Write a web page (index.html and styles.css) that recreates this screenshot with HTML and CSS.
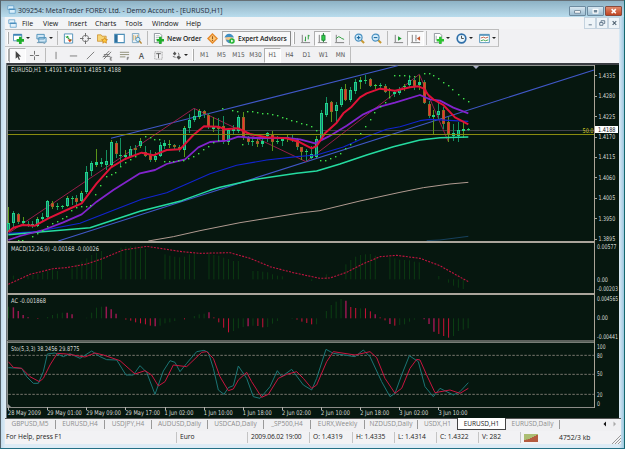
FILE: index.html
```html
<!DOCTYPE html>
<html lang="en">

<head>
    <meta charset="UTF-8">
    <title>309254: MetaTrader FOREX Ltd. - Demo Account - [EURUSD,H1]</title>
    <link rel="stylesheet" href="styles.css">
</head>

<body>
    <div class="window">
        <div class="titlebar">
            <svg class="app-icon" viewBox="0 0 12 12"><path d="M1 1h8v5H1zM3 5h8v6H3z" fill="#d8eefa" stroke="#5a9cc8"/><path d="M3 6h8" stroke="#3d83b5"/></svg>
            <span class="title">309254: MetaTrader FOREX Ltd. - Demo Account - [EURUSD,H1]</span>
            <div class="window-buttons">
                <span class="wbtn"><svg viewBox="0 0 16 9"><rect x="5" y="4" width="6" height="2.5" fill="#fff" stroke="#4d6478" stroke-width=".7"/></svg></span>
                <span class="wbtn"><svg viewBox="0 0 16 9"><rect x="5.5" y="2.5" width="5" height="4" fill="#6f8799" stroke="#fff" stroke-width="1.3"/></svg></span>
                <span class="wbtn close"><svg viewBox="0 0 16 9"><path d="M6 2.3l4.5 4.4M10.5 2.3L6 6.7" stroke="#fff" stroke-width="1.7"/></svg></span>
            </div>
        </div>

        <div class="menubar">
            <svg class="app-icon" viewBox="0 0 12 12"><path d="M1 1h8v5H1zM3 5h8v6H3z" fill="#e4f2fb" stroke="#5a9cc8"/><path d="M3 6h8" stroke="#3d83b5"/></svg>
            <span class="menu m-file">File</span>
            <span class="menu m-view">View</span>
            <span class="menu m-insert">Insert</span>
            <span class="menu m-charts">Charts</span>
            <span class="menu m-tools">Tools</span>
            <span class="menu m-window">Window</span>
            <span class="menu">Help</span>
            <div class="child-buttons">
                <span><svg viewBox="0 0 11 11"><path d="M4 7.5h3.5" stroke="#5d7387"/></svg></span>
                <span><svg viewBox="0 0 11 11" fill="none" stroke="#5d7387"><path d="M4.5 4.500V3h4v3H7M3 5h3.500v3H3z"/></svg></span>
                <span><svg viewBox="0 0 11 11"><path d="M4 3.500l4 4M8 3.500l-4 4" stroke="#4f6170" stroke-width="1.2"/></svg></span>
            </div>
        </div>

        <div class="toolbar main-tools">
            <span class="handle"></span>
            <span class="drop"><svg viewBox="0 0 12 12"><path d="M.5 1.500h9v7h-9z" fill="#fff" stroke="#4d8fb8"/><path d="M.5 2h9" stroke="#3d83b5" stroke-width="2"/><path d="M8 4v8M4 8h8" stroke="#1fae2a" stroke-width="3"/></svg><i class="caret"></i></span>
            <span class="drop"><svg viewBox="0 0 12 12"><path d="M1 1.500h8v5H1zM3 5h8v5H3z" fill="#cfe6f5" stroke="#4d8fb8"/><path d="M1 10.500h6l3 1" stroke="#6a93ad" fill="none"/></svg><i class="caret"></i></span>
            <span class="sep"></span>
            <span class="tool"><svg viewBox="0 0 12 12"><path d="M1.500 1h9v10h-9z" fill="#fff" stroke="#4d8fb8"/><path d="M3 5l2-2 2 2z" fill="#18a028"/><path d="M5 7l2.500 3L10 7z" fill="#d8401c"/><path d="M3 4l6 4" stroke="#2b9a38"/></svg></span>
            <span class="tool"><svg viewBox="0 0 12 12"><circle cx="6" cy="6" r="3.500" fill="none" stroke="#777"/><path d="M6 0v4M6 8v4M0 6h4M8 6h4" stroke="#666"/></svg></span>
            <span class="tool"><svg viewBox="0 0 12 12"><path d="M.5 2h4l1 1.500H10V9H.5z" fill="#f6d476" stroke="#c98b25" stroke-width=".8"/><path d="M8.300 5l1 2 2.200.3-1.600 1.500.4 2.300-2-1.100-2 1.100.4-2.300L5 7.300 7.300 7z" fill="#ffc83a" stroke="#c57a18" stroke-width=".7"/></svg></span>
            <span class="tool"><svg viewBox="0 0 12 12"><path d="M.8 1.500h10.400v9H.8z" fill="#fff" stroke="#4d8fb8" stroke-width="1.2"/><path d="M1 2h3v8H1z" fill="#2d6f9d"/></svg></span>
            <span class="tool"><svg viewBox="0 0 12 12"><path d="M1.500.5h7v10h-7z" fill="#e9f3fa" stroke="#7ea6c1"/><path d="M3 2v6M5 3v4M7 2v3" stroke="#d19a3c" stroke-width=".8"/><circle cx="7.500" cy="7" r="2.300" fill="#d8effb" stroke="#4d8fb8"/><path d="M9 8.500l2.500 3" stroke="#b98935" stroke-width="1.5"/></svg></span>
            <span class="sep"></span>
            <span class="new-order"><svg viewBox="0 0 12 12"><path d="M1.500.5h6l2 2v8h-8z" fill="#fff" stroke="#8a9298"/><path d="M3 3h4M3 5h5M3 7h3" stroke="#9fa8ad" stroke-width=".8"/><path d="M8 4v8M4 8h8" stroke="#1fae2a" stroke-width="2.8"/></svg><b>New Order</b></span>
            <span class="tool"><svg viewBox="0 0 12 12"><path d="M6 1l5 5-5 5-5-5z" fill="#fdc878" stroke="#e58a2c" stroke-width="1.5"/><path d="M6 3.500v3.200M6 7.600v1" stroke="#9a5714" stroke-width="1.2"/></svg></span>
            <span class="experts"><svg viewBox="0 0 12 12"><circle cx="5.500" cy="6" r="4" fill="#f2c38c"/><path d="M.5 5Q5 3.500 11 5 9 .8 5.500.8T.5 5z" fill="#3f8fc3"/><path d="M2 7q2 5 5 4V8z" fill="#4a91bd"/><circle cx="8.700" cy="8.700" r="3" fill="#24b534"/><path d="M7.800 7v3.400l2.600-1.700z" fill="#fff"/></svg><b>Expert Advisors</b></span>
            <span class="handle wide"></span>
            <span class="tool"><svg viewBox="0 0 12 12"><path d="M2.500 2v8.500H11M1 10.500h1" stroke="#777" fill="none"/><path d="M6 4v5M5 8h1M9 2v5M9 3h1.500" stroke="#249a35"/></svg></span>
            <span class="tool pressed"><svg viewBox="0 0 12 12"><path d="M2.500 2v8.500H11M1 10.500h1" stroke="#777" fill="none"/><path d="M7 0v10" stroke="#147a2b"/><path d="M5.200 2.500h3.600V8H5.200z" fill="#2fcb4a" stroke="#147a2b" stroke-width=".8"/></svg></span>
            <span class="tool"><svg viewBox="0 0 12 12"><path d="M2.500 2v8.500H11M1 10.500h1" stroke="#777" fill="none"/><path d="M2.500 6q2.500-3 4-1.500T11 7" stroke="#249a35" fill="none"/></svg></span>
            <span class="sep narrow"></span>
            <span class="tool"><svg viewBox="0 0 12 12"><path d="M7.500 7.500l3.500 3.500" stroke="#c89830" stroke-width="2.2"/><circle cx="5" cy="5" r="3.800" fill="#d4ecfa" stroke="#4a90c0" stroke-width="1.3"/><path d="M3 5h4M5 3v4" stroke="#1f6ca3" stroke-width="1.2"/></svg></span>
            <span class="tool"><svg viewBox="0 0 12 12"><path d="M7.500 7.500l3.500 3.500" stroke="#c89830" stroke-width="2.2"/><circle cx="5" cy="5" r="3.800" fill="#d4ecfa" stroke="#4a90c0" stroke-width="1.3"/><path d="M3 5h4" stroke="#1f6ca3" stroke-width="1.2"/></svg></span>
            <span class="sep"></span>
            <span class="tool"><svg viewBox="0 0 12 12"><path d="M2.500 2v8.500H11M1 10.500h1" stroke="#777" fill="none"/><path d="M5.500 3.500v5l4-2.500z" fill="#1e9b31"/></svg></span>
            <span class="tool pressed"><svg viewBox="0 0 12 12"><path d="M2.500 2v8.500H11M1 10.500h1M6.500 2v7" stroke="#777" fill="none"/><path d="M11 3.500v5L7.500 6z" fill="#c4532c"/></svg></span>
            <span class="sep"></span>
            <span class="drop"><svg viewBox="0 0 12 12"><path d="M1.500.5h6l2 2v8h-8z" fill="#fff" stroke="#8a9298"/><path d="M3.500 3v5" stroke="#9fa8ad"/><path d="M8 4v8M4 8h8" stroke="#2cc430" stroke-width="2.8"/></svg><i class="caret"></i></span>
            <span class="drop"><svg viewBox="0 0 12 12"><circle cx="6" cy="6" r="4.700" fill="#e9f5fc" stroke="#2f6fa8" stroke-width="1.8"/><path d="M6 3v3h2.500" stroke="#444" fill="none"/></svg><i class="caret"></i></span>
            <span class="drop"><svg viewBox="0 0 12 12"><path d="M.7 1.500h10.600v9H.7z" fill="#fff" stroke="#4d8fb8"/><path d="M1 2.300h10" stroke="#4d8fb8" stroke-width="1.5"/><path d="M2 5.500l3-1 2 1 3-1" stroke="#b54a30" fill="none" stroke-width=".9"/><path d="M2 8.500l3-1 2 1 3-1" stroke="#249a35" fill="none" stroke-width=".9"/></svg><i class="caret"></i></span>
        </div>

        <div class="toolbar line-tools">
            <span class="handle"></span>
            <span class="tool pressed"><svg viewBox="0 0 12 12"><path d="M4 1v8.500l2-2 1.500 3.500 1.300-.6L7.300 7H10z" fill="#444"/></svg></span>
            <span class="tool"><svg viewBox="0 0 12 12"><path d="M6 1v4M6 7v4M1 6h4M7 6h4" stroke="#666"/></svg></span>
            <span class="sep"></span>
            <span class="tool"><svg viewBox="0 0 12 12"><path d="M5.500 2v8" stroke="#777"/></svg></span>
            <span class="tool"><svg viewBox="0 0 12 12"><path d="M2 6.500h8" stroke="#777"/></svg></span>
            <span class="tool"><svg viewBox="0 0 12 12"><path d="M2 10l8-8" stroke="#777"/></svg></span>
            <span class="tool"><svg viewBox="0 0 12 12"><path d="M1 8l7-7M2 10l8-8M2 5h6M1 7h8" stroke="#666" stroke-width=".9"/><path d="M11 8H9v3h2M9 9.500h1.500" stroke="#555" fill="none" stroke-width=".7"/></svg></span>
            <span class="tool"><svg viewBox="0 0 12 12"><path d="M1 2.500h10M1 5h10M1 7.500h6" stroke="#8a8a72"/><path d="M11 8H9v3M9 9.500h1.500" stroke="#555" fill="none" stroke-width=".7"/></svg></span>
            <span class="tool letter">A</span>
            <span class="tool"><svg viewBox="0 0 12 12"><path d="M2 2h8v8H2z" stroke="#888" stroke-dasharray="1 1" fill="none"/><path d="M3.500 4h5M6 4v5" stroke="#555"/></svg></span>
            <span class="drop"><svg viewBox="0 0 12 12"><path d="M2 4l2-2.500L6 4 4 6zM6 8l2-2 3 2-2.500 2.500z" fill="#555"/><path d="M2 7l3 1M8 3l1 3" stroke="#666"/></svg><i class="caret"></i></span>
            <span class="handle wide"></span>
            <span class="tool period">M1</span>
            <span class="tool period">M5</span>
            <span class="tool period">M15</span>
            <span class="tool period">M30</span>
            <span class="tool period pressed">H1</span>
            <span class="tool period">H4</span>
            <span class="tool period">D1</span>
            <span class="tool period">W1</span>
            <span class="tool period">MN</span>
        </div>

        <svg class="chart" id="chart" viewBox="6 63 613 355"></svg>

        <div class="tabs">
            <span class="tab w51">GBPUSD,M5</span>
            <span class="tab w49">EURUSD,H4</span>
            <span class="tab w47">USDJPY,H4</span>
            <span class="tab w56">AUDUSD,Daily</span>
            <span class="tab w56">USDCAD,Daily</span>
            <span class="tab w47">_SP500,H4</span>
            <span class="tab w54">EURX,Weekly</span>
            <span class="tab w53">NZDUSD,Daily</span>
            <span class="tab w39 last">USDX,H1</span>
            <span class="tab w49 active">EURUSD,H1</span>
            <span class="tab w54">EURUSD,Daily</span>
            <svg class="tab-arrows" viewBox="0 0 14 6"><path d="M3 .5v5L.5 3z" fill="#111"/><path d="M10.500.5v5L13 3z" fill="#aaa"/></svg>
        </div>

        <div class="status">
            <span class="cell help">For Help, press F1</span>
            <span class="cell profile">Euro</span>
            <span class="cell date">2009.06.02 19:00</span>
            <span class="cell open">O: 1.4319</span>
            <span class="cell price">H: 1.4335</span>
            <span class="cell price">L: 1.4314</span>
            <span class="cell price">C: 1.4322</span>
            <span class="cell price">V: 282</span>
            <svg class="signal" viewBox="0 0 15 8"><path d="M1 0v8M3 0v8M5 0v8M7 0v8M9 0v8M11 0v8M13 0v8" stroke="#8fa83c" stroke-width="1.4"/><path d="M1 6v2M3 5.500V8M5 5v3M7 4v4M9 3v5M11 2v6M13 1v7" stroke="#b8322a" stroke-width="1.4"/></svg>
            <span class="traffic">4752/3 kb</span>
            <svg class="grip" viewBox="0 0 10 10"><path d="M1 10l9-9M4 10l6-6M7 10l3-3" stroke="#999"/></svg>
        </div>
    </div>
    <script src="chart.js"></script>
</body>

</html>
```
FILE: styles.css
```css
body {
    margin: 0;
    font-family: "Open Sans", "Noto Sans", sans-serif;
    font-size: 7.5px;
    color: #222;
    overflow: hidden;
}

.window {
    box-sizing: border-box;
    width: 625px;
    height: 449px;
    padding: 0 5px 4px 5px;
    background: linear-gradient(to right, #56636b 0, #56636b 1px, #c3dced 1px, #dcebf5 5px, #dcebf5 619px, #c3dced 621px, #9cc9e0 624px, #17686e 624px);
    border-bottom: 1px solid #236f84;
    display: flex;
    flex-direction: column;
}

.window > * {
    flex: none;
}

svg {
    display: block;
}

.titlebar {
    height: 17px;
    margin: 0 -4px;
    padding: 0 2px 0 6px;
    border-top: 1px solid #666f75;
    box-sizing: border-box;
    background: linear-gradient(#8db2c5, #a9cbdc 60%, #b9dced);
    display: flex;
    align-items: center;
}

.app-icon {
    width: 9px;
    height: 9px;
}

.title {
    flex: 1;
    margin-left: 2px;
    padding-top: 3px;
    font-size: 7px;
    letter-spacing: -0.02px;
    color: #1c2a3a;
    white-space: nowrap;
}

.window-buttons {
    display: flex;
    gap: 1px;
    padding-top: 3px;
}

.wbtn {
    width: 15px;
    height: 8px;
    border: 1px solid #6d8ba0;
    border-radius: 1px;
    background: linear-gradient(#d6e6f0, #9dbdd1);
}

.wbtn.close {
    background: linear-gradient(#e08a6c, #c04523);
    border-color: #8a4a3c;
}

.menubar {
    height: 12px;
    padding-left: 3px;
    background: #f3f4f6;
    display: flex;
    align-items: center;
}

.menu {
    font-size: 7px;
    color: #111;
}

.m-file {
    width: 21px;
    margin-left: 5px;
}

.m-view {
    width: 25px;
}

.m-insert {
    width: 27px;
}

.m-charts {
    width: 30px;
}

.m-tools {
    width: 27px;
}

.m-window {
    width: 34px;
}

.child-buttons {
    margin-left: auto;
    display: flex;
}

.child-buttons span {
    width: 10px;
    height: 10px;
    border: 1px solid #c4d3df;
    background: #eef4f8;
}

.toolbar {
    display: flex;
    align-items: center;
    height: 16px;
    background: #f1f1f3;
    border-right: 1px solid #bdbdbd;
    box-sizing: border-box;
}

/* the shadows carry the face colour on to the right of each bar */
.main-tools {
    width: 494px;
    height: 18px;
    border-top: 1px solid #bdbdbd;
    border-bottom: 1px solid #c4c4c4;
    box-shadow: 120px 0 0 #f1f1f3;
    clip-path: inset(0 -120px 0 0);
}

.line-tools {
    width: 346px;
    box-shadow: 140px 0 0 #f1f1f3, 270px 0 0 #f1f1f3;
    clip-path: inset(0 -268px 0 0);
}

.handle {
    width: 2px;
    height: 12px;
    margin-left: 2px;
    border-left: 1px solid #fff;
    background: #aaa;
    flex: none;
    box-sizing: border-box;
}

.handle.wide {
    margin: 0 2px;
}

.sep {
    width: 1px;
    height: 14px;
    margin: 0 2px;
    background: #bbb;
    flex: none;
}

.sep.narrow {
    margin: 0 1px;
}

.tool,
.drop {
    display: flex;
    align-items: center;
    justify-content: center;
    width: 17px;
    height: 15px;
    box-sizing: border-box;
    flex: none;
}

.drop {
    width: 23px;
    justify-content: flex-start;
    padding-left: 4px;
    gap: 2px;
}

.tool svg,
.drop svg,
.new-order svg,
.experts svg {
    width: 11px;
    height: 11px;
    flex: none;
}

.caret {
    border: 2px solid transparent;
    border-top-color: #222;
    border-bottom: 0;
}

.pressed {
    background: #fafafb;
    border: 1px solid #b0b0b0;
    border-right-color: #fff;
    border-bottom-color: #fff;
}

.new-order {
    width: 54px;
    padding-left: 3px;
    box-sizing: border-box;
    display: flex;
    align-items: center;
    gap: 3px;
    white-space: nowrap;
    flex: none;
}

.new-order b,
.experts b {
    font-size: 6.7px;
    font-weight: 600;
    letter-spacing: -0.1px;
    color: #222;
}

.experts {
    width: 69px;
    height: 15px;
    margin-left: 1px;
    padding-left: 1px;
    box-sizing: border-box;
    display: flex;
    align-items: center;
    gap: 3px;
    white-space: nowrap;
    flex: none;
    border: 1px solid #aaa;
    border-right-color: #888;
    background: #f7f7f8;
}

.letter {
    font-size: 8px;
    font-weight: 600;
    color: #555;
}

.period {
    font-family: "DejaVu Sans Condensed", "DejaVu Sans", sans-serif;
    font-size: 6.5px;
    color: #555;
}

.chart {
    width: 613px;
    height: 355px;
    margin-left: 1px;
    overflow: visible;
}

.chart text {
    font-family: "DejaVu Sans", sans-serif;
    font-size: 6.4px;
    fill: #d8dcd8;
}

.tabs {
    height: 13px;
    margin-right: -1px;
    background: #f0f0f2;
    display: flex;
    box-sizing: border-box;
    border-top: 1px solid #555;
}

.tab {
    box-sizing: border-box;
    height: 9px;
    margin-top: 1px;
    border-right: 1px solid #999;
    text-align: center;
    font-size: 6.5px;
    line-height: 8px;
    color: #8c8c8c;
    white-space: nowrap;
}

.tab.last {
    border-right: 0;
}

.tab.active {
    height: 12px;
    margin-top: -1px;
    background: #fff;
    border: 1px solid #444;
    border-top: 0;
    line-height: 12px;
    color: #222;
}

.w39 { width: 39px; }
.w47 { width: 47px; }
.w49 { width: 49px; }
.w51 { width: 51px; }
.w53 { width: 53px; }
.w54 { width: 54px; }
.w56 { width: 56px; }

.tab-arrows {
    width: 14px;
    height: 6px;
    margin: 2px 4px 0 auto;
}

.status {
    height: 13px;
    margin-right: -1px;
    background: #f2f2f4;
    display: flex;
    align-items: center;
}

.cell {
    box-sizing: border-box;
    height: 11px;
    line-height: 10px;
    padding-left: 3px;
    border-right: 1px solid #c4c4c4;
    font-size: 6.7px;
    white-space: nowrap;
}

.help {
    width: 172px;
    padding-left: 1px;
}

.profile {
    width: 71px;
}

.date {
    width: 62px;
    letter-spacing: -0.15px;
}

.open {
    width: 43px;
}

.price {
    width: 42px;
}

.signal {
    width: 15px;
    height: 8px;
    margin-left: 3px;
}

.traffic {
    margin-left: 20px;
    font-size: 6.8px;
}

.grip {
    width: 10px;
    height: 10px;
    margin-left: auto;
    align-self: flex-end;
}
```
FILE: chart.js
```js
const svg = document.getElementById('chart');
const STEP = 4.89;
const barX = i => 8.5 + STEP * i;
let out = '';

// [high, body top, body bottom, low, bull]
const candles = [
    [207,223,231,232,1],[211,213,223,228,1],[213,214,222,224,0],[217,221,223,225,1],[221,224,226,227,0],
    [221,224,226,228,1],[217,219,226,227,1],[213,217,219,221,1],[200,201,217,218,1],[201,203,207,209,0],
    [203,206,207,210,1],[205,206,207,209,1],[196,198,206,207,1],[196,198,199,205,1],[195,198,202,205,0],
    [191,193,201,202,1],[166,172,192,194,1],[161,163,171,176,1],[149,162,165,167,1],[158,162,164,167,1],
    [150,161,165,170,1],[140,142,165,166,1],[141,143,154,158,0],[138,155,156,167,0],[150,155,157,160,1],
    [146,149,157,158,1],[145,148,150,155,0],[138,141,146,148,1],[146,152,156,157,0],[150,155,160,162,0],
    [152,156,160,162,1],[142,145,156,157,1],[140,143,146,149,1],[140,144,145,148,1],[144,145,147,150,0],
    [145,147,150,152,0],[126,128,150,157,1],[114,120,128,133,1],[109,116,120,122,1],[109,111,117,119,1],
    [110,111,114,118,0],[113,115,127,129,0],[117,127,129,132,1],[118,127,129,141,0],[116,126,142,144,0],
    [128,130,142,145,1],[125,128,131,134,1],[115,117,131,133,1],[112,117,137,140,0],[136,138,142,145,0],
    [137,141,142,146,1],[137,141,144,147,0],[136,141,144,147,1],[132,133,136,142,1],[131,134,142,151,0],
    [136,141,142,144,1],[138,139,141,146,1],[134,137,139,142,1],[135,138,139,142,0],[138,140,147,150,0],
    [147,147,152,160,0],[149,151,152,161,1],[146,154,158,159,1],[136,139,157,158,1],[110,113,139,141,1],
    [97,103,115,117,1],[101,102,112,122,0],[102,105,111,123,1],[87,89,105,107,1],[84,89,100,101,0],
    [87,90,100,102,1],[79,82,91,94,1],[77,80,82,89,1],[75,80,81,84,1],[78,79,86,87,0],
    [84,85,86,89,1],[83,85,86,89,1],[84,86,92,93,0],[88,89,91,98,0],[90,92,94,97,1],
    [87,89,93,95,1],[84,86,87,91,1],[75,80,85,87,1],[78,80,86,90,0],[75,82,85,90,1],
    [80,82,103,104,0],[101,104,116,118,0],[110,115,117,134,1],[102,111,115,120,1],[107,110,124,129,0],
    [117,122,134,142,0],[124,133,136,141,1],[122,130,136,142,1],[122,129,131,138,1],[128,129,130,131,1]
];

// curve vertices, three units to the pixel
const averages = {
    blue: '25,520 110,515 240,490 290,470 425,418 500,398 560,372 630,341 710,316 800,300 890,290 950,285 1030,261 1100,230 1160,208 1200,200 1260,182 1290,178 1405,184',
    aqua: '25,524 110,517 270,503 420,454 545,422 630,391 660,382 760,359 890,340 950,333 1020,312 1100,285 1180,260 1260,240 1320,233 1405,231',
    violet: '25,540 60,528 130,510 190,487 245,463 290,425 340,390 420,340 465,330 500,312 555,298 595,262 630,246 680,242 715,230 760,234 860,234 900,238 945,250 985,230 1040,197 1090,163 1140,140 1185,128 1260,105 1290,118 1320,122 1360,143 1405,160',
    red: '25,515 40,503 69,495 105,497 145,475 200,450 245,430 290,370 333,322 375,297 425,278 460,286 500,270 540,268 580,225 612,199 655,200 675,208 715,205 750,222 800,232 860,235 900,247 935,265 950,258 975,220 1010,188 1030,160 1055,140 1080,112 1100,100 1140,86 1185,92 1230,82 1255,79 1270,85 1285,105 1300,118 1330,135 1365,172 1405,193',
    tan: '445,543 520,530 600,512 720,488 900,459 960,452 1080,423 1200,397 1270,383 1350,372 1405,367',
    navy: '1280,542 1320,540 1405,529',
    zigzag: '25,520 582,145 918,305 1258,43 1345,245',
    trend: '175,543 600,407 1782,30',
    channel: '333,235 630,160 1193,17'
};
const strokes = {
    blue: ['#1224cf', 1.1], aqua: ['#25dca0', 1.5], violet: ['#8224cc', 1.8], red: ['#e01238', 2],
    tan: ['#b09a90', 1], navy: ['#16405c', 1], zigzag: ['#a81c50', .9], trend: ['#4058c8', 1.1], channel: ['#4058c8', 1.1]
};
const sar = '55,540 67,541 98,530 113,519 127,510 142,500 157,491 172,483 186,475 198,468 213,450 230,442 245,440 260,438 272,436 287,404 302,375 318,350 333,342 347,337 362,320 377,307 391,299 406,290 436,230 450,233 463,237 478,238 492,305 507,305 521,304 536,301 550,300 565,295 580,290 595,280 610,268 625,258 640,248 655,240 668,145 698,151 713,155 728,253 742,153 757,153 772,156 786,159 801,161 816,163 831,167 846,171 860,176 875,181 890,185 905,189 918,193 933,200 948,210 962,301 977,300 992,296 1006,288 1021,280 1036,265 1050,252 1065,238 1080,220 1095,199 1110,177 1124,158 1140,140 1155,128 1168,113 1183,45 1198,45 1213,47 1228,48 1243,50 1272,41 1287,41 1301,47 1316,55 1330,66 1345,77 1358,89 1374,102 1389,114 1404,125';

const macdSignal = '25,148 90,118 160,101 200,98 260,87 310,70 370,45 440,34 480,40 545,50 600,55 690,53 750,70 810,95 880,113 960,130 990,129 1040,112 1090,86 1140,65 1190,61 1260,70 1320,92 1360,115 1405,140';
const macdBars = {
    1:122, 4:122, 5:120, 6:117, 7:112, 8:108, 9:105, 10:108, 13:100, 14:88, 15:80, 16:70, 17:60, 18:53, 19:48,
    23:38, 24:35, 25:34, 26:34, 27:35, 28:42, 32:58, 33:62, 34:65, 35:67, 36:65, 37:58, 38:55, 41:55, 42:60,
    43:62, 44:68, 45:72, 46:78, 47:78, 50:108, 51:108, 52:110, 53:112, 54:118, 55:122, 56:124, 62:138, 65:118, 69:88,
    70:75, 71:65, 72:60, 73:58, 74:57, 75:62, 78:66, 79:70, 80:74, 81:75, 82:76, 83:80, 84:82, 88:123,
    90:143, 91:152, 92:158, 93:162
};
// g rising, r falling, m falling with a wider bar
const acBars = {
    0:'g215', 1:'m217', 2:'m228', 3:'m240', 4:'m247', 6:'r252', 8:'g246', 9:'g240', 10:'g236', 11:'g233', 12:'m233', 13:'m238',
    16:'g248', 17:'g233', 18:'g218', 19:'g215', 20:'m215', 21:'m223', 22:'m236', 24:'r254', 25:'r257', 26:'r262', 27:'r265',
    28:'r268', 29:'r272', 30:'m274', 31:'g272', 32:'g265', 33:'g262', 34:'g258', 36:'r253', 38:'g243', 39:'g238', 40:'g236',
    41:'m232', 42:'r247', 43:'r262', 44:'r278', 45:'r292', 46:'g288', 47:'g280', 48:'g276', 49:'m274', 50:'g272',
    51:'r273', 52:'r277', 53:'g276', 54:'g266', 55:'g258', 58:'g252', 59:'r254', 60:'r260', 61:'r264', 62:'r268', 63:'g268',
    65:'g228', 66:'g210', 67:'g200', 68:'g192', 69:'m197', 70:'r216', 71:'r219', 72:'g220', 73:'r220', 74:'r229', 75:'m238',
    76:'r247', 77:'r256', 78:'m267', 79:'r272', 80:'g270', 81:'g268', 82:'g260', 83:'g254', 85:'m253', 86:'m267', 87:'m290',
    88:'r297', 89:'r303', 90:'r308', 91:'g303', 92:'g288', 93:'g284', 94:'g280'
};
const stochK = '25,398 65,400 80,425 100,445 115,445 130,410 142,357 165,354 190,365 210,356 240,370 275,348 300,365 320,374 350,375 378,420 400,420 420,392 440,412 465,478 490,408 510,377 525,382 540,410 560,385 590,350 612,346 625,352 640,400 655,465 672,478 685,458 700,452 715,393 740,430 760,485 780,490 810,455 832,407 845,425 875,403 910,450 935,465 950,430 978,343 1000,355 1065,365 1090,345 1110,365 1145,440 1170,485 1185,475 1205,420 1228,362 1255,380 1275,455 1300,485 1320,460 1360,480 1380,470 1405,443';
const stochD = '25,380 40,397 65,400 90,425 118,440 130,430 150,390 172,355 200,357 255,366 285,354 310,360 360,377 405,417 435,407 455,420 475,453 495,440 520,390 560,395 605,352 620,350 640,370 660,425 685,467 700,462 715,435 740,412 755,440 785,487 805,478 835,430 860,418 890,410 910,430 935,460 950,450 980,380 1000,350 1065,360 1110,350 1130,368 1155,430 1185,475 1205,460 1230,400 1250,373 1260,375 1280,420 1305,473 1350,465 1380,475 1405,460';

function rect(x, y, w, h, fill) {
    out += `<rect x="${x}" y="${y}" width="${w}" height="${h}" fill="${fill}"/>`;
}
function line(points, color, width, dash) {
    out += `<polyline points="${points}" fill="none" stroke="${color}" stroke-width="${width}" stroke-linejoin="round" vector-effect="non-scaling-stroke"${dash ? ` stroke-dasharray="${dash}"` : ''}/>`;
}
function label(x, y, text, width, fill) {
    out += `<text x="${x}" y="${y}" textLength="${width}" lengthAdjust="spacingAndGlyphs"${fill ? ` style="fill:${fill}"` : ''}>${text}</text>`;
}

// frame
rect(6, 63, 613, 355, '#06170f');
rect(6, 63, 613, 2, '#3a3d42');
rect(7, 65, 588, 1, '#90948f');
rect(7, 65, 1, 342, '#90948f');
rect(6, 63, 1, 355, '#6d7478');

// price panel
rect(8, 130, 586, 1, '#40404a');
for (const name of ['tan', 'navy', 'trend', 'channel', 'zigzag']) {
    out += '<g transform="translate(0 60) scale(.33333)">';
    line(averages[name], ...strokes[name]);
    out += '</g>';
}
candles.forEach(([h, t, b, l, bull], i) => {
    const x = Math.round(barX(i) - .5);
    rect(x, h, 1, l - h, i % 3 ? '#159060' : '#5a9418');
    if (b - t < 2) {
        rect(x - 1, t, 3, 1, '#28d060');
    } else if (bull) {
        rect(x - 1, t, 3, b - t, '#20d488');
        if (b - t > 3) rect(x, t + 1, 1, b - t - 2, '#167878');
    } else {
        rect(x - 1, t, 3, b - t, '#5c8a20');
        rect(x - .5, t + .5, 2, b - t - 1, '#ee3030');
    }
});
out += '<g transform="translate(0 60) scale(.33333)">';
for (const name of ['blue', 'aqua', 'violet', 'red']) line(averages[name], ...strokes[name]);
out += '</g>';
sar.split(' ').forEach(p => {
    const [x, y] = p.split(',');
    rect(Math.round(x / 3 - .5), Math.round(y / 3 + 59.5), 1.4, 1.4, '#3fe04a');
});
rect(8, 134, 586, 1, '#8a8c10');
label(582.5, 132.7, '50.0', 11, '#d0c828');
out += '<path d="M473 66h6l-3 3z" fill="#a9adc4"/>';

// indicator panels
out += '<g transform="translate(0 235) scale(.33333)">';
for (const i in macdBars) line(`${barX(i) * 3},133 ${barX(i) * 3},${macdBars[i]}`, '#0b3a12', 1);
line(macdSignal, '#c01440', 1.1, '2 1.3');
for (const i in acBars) {
    const kind = acBars[i][0];
    line(`${barX(i) * 3},250 ${barX(i) * 3},${acBars[i].slice(1)}`, { g: '#0c3f14', r: '#cc1238', m: '#981850' }[kind], kind === 'm' ? 1.5 : 1);
}
for (const y of [361, 418, 478]) line(`25,${y} 1782,${y}`, '#858078', .9, '2.5 1.5');
line(stochK, '#1b7474', 1);
line(stochD, '#c81440', 1);
out += '</g>';

// separators and axes
rect(7, 241, 588, 2, '#aaa59b');
rect(7, 293, 588, 2, '#aaa59b');
rect(7, 340, 588, 1, '#5c605c');
rect(7, 341.5, 588, 1.2, '#aaaaa4');
rect(7, 407, 588, 1, '#8c8c88');
rect(594, 65, 1, 343, '#aaa497');
out += '<path d="M8 404v3h3z" fill="#999"/>';

label(11, 72.3, 'EURUSD,H1&#160; 1.4191 1.4191 1.4185 1.4188', 110);
label(11, 250.8, 'MACD(12,26,9) -0.00168 -0.00026', 88);
label(11, 302.8, 'AC -0.001868', 35);
label(11, 350.8, 'Sto(5,3,3) 38.2456 29.8775', 68.5);

['1.4335', '1.4280', '1.4225', '1.4170', '1.4115', '1.4060', '1.4005', '1.3950', '1.3895'].forEach((p, i) => {
    const y = 75.2 + i * 20.45;
    rect(595, Math.round(y), 2, 1, '#aaa497');
    label(598.5, y + 2.4, p, 16.7);
});
rect(595, 126, 23, 7, '#fff');
label(598, 132, '1.4188', 17.5, '#222');

const scale = [
    ['0.00577', 249, 19.5], ['0.00', 281.6, 11], ['-0.00203', 291.3, 21],
    ['0.004565', 301.2, 21], ['0.00', 320.3, 11], ['-0.00441', 339.2, 21],
    ['100', 349, 8.5], ['80', 357.6, 5.5], ['50', 376.3, 5.5], ['20', 396.6, 5.5], ['0', 405.6, 3]
];
scale.forEach(([text, y, width]) => label(597, y, text, width));

['28 May 2009', '29 May 01:00', '29 May 09:00', '29 May 17:00', '1 Jun 02:00', '1 Jun 10:00', '1 Jun 18:00',
 '2 Jun 02:00', '2 Jun 10:00', '2 Jun 18:00', '3 Jun 02:00', '3 Jun 10:00'].forEach((t, i) => {
    const x = 8 + i * 39.13;
    rect(Math.round(x), 407, 1, 3, '#b4b4ae');
    label(x, 415, t, i === 0 ? 33 : i < 4 ? 34.7 : 29);
});

svg.innerHTML = out;
```
